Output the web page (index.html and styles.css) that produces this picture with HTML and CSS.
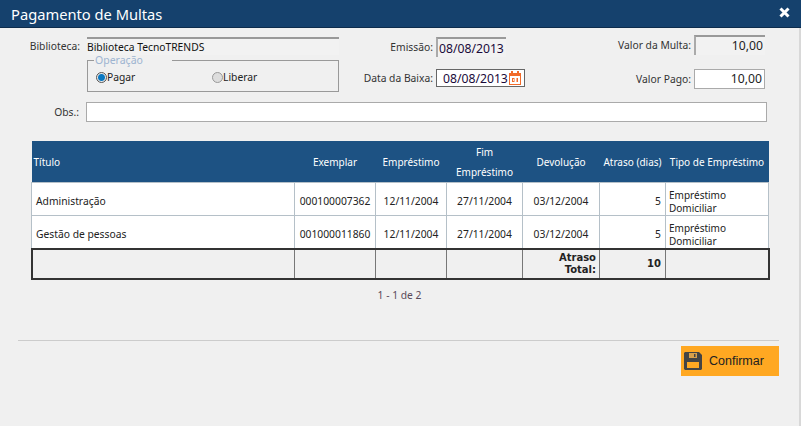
FILE: index.html
```html
<!DOCTYPE html>
<html lang="en">
<head>
    <meta charset="UTF-8">
    <title>Pagamento de Multas</title>
    <link rel="stylesheet" href="styles.css">
</head>
<body>
    <div class="dialog">
        <div class="dialog-header">
            <h1 class="dialog-title">Pagamento de Multas</h1>
            <svg class="close-icon" width="11" height="11" viewBox="0 0 11 11"><path d="M1.500 1.500l8 8M9.500 1.500l-8 8" stroke="#fff" stroke-width="3"/></svg>
        </div>

        <div class="form-top">
            <div class="col-a">
                <div class="field-row">
                    <label class="label-a">Biblioteca:</label>
                    <div class="readonly lib-value">Biblioteca TecnoTRENDS</div>
                </div>
                <fieldset class="operation">
                    <legend>Operação</legend>
                    <div class="radio-item radio-pay"><span class="radio on"></span>Pagar</div>
                    <div class="radio-item"><span class="radio"></span>Liberar</div>
                </fieldset>
            </div>
            <div class="col-b">
                <div class="field-row">
                    <label>Emissão:</label>
                    <div class="readonly date-value">08/08/2013</div>
                </div>
                <div class="field-row low-row">
                    <label>Data da Baixa:</label>
                    <div class="date-input">08/08/2013
                        <svg width="12" height="14" viewBox="0 0 12 14"><path d="M0 2h2V0h2v2h4V0h2v2h2v12H0z" fill="#f26b2a"/><rect x="1" y="5" width="10" height="8" fill="#fff"/><path d="M3 7h2.500v4H3zM7.500 7H9v4H7.500z" fill="#f26b2a"/><rect x="4" y="8" width="0.800" height="2" fill="#fff"/></svg>
                    </div>
                </div>
            </div>
            <div class="col-c">
                <div class="field-row">
                    <label>Valor da Multa:</label>
                    <div class="readonly money-value">10,00</div>
                </div>
                <div class="field-row paid-row">
                    <label>Valor Pago:</label>
                    <div class="text-input money-input">10,00</div>
                </div>
            </div>
        </div>

        <div class="field-row obs-row">
            <label class="label-obs">Obs.:</label>
            <div class="text-input obs-input"></div>
        </div>

        <table class="fines">
            <colgroup>
                <col class="c-title"><col class="c-copy"><col class="c-date"><col class="c-end"><col class="c-back"><col class="c-late"><col class="c-type">
            </colgroup>
            <thead>
                <tr>
                    <th class="left">Título</th>
                    <th>Exemplar</th>
                    <th>Empréstimo</th>
                    <th>Fim<br>Empréstimo</th>
                    <th>Devolução</th>
                    <th>Atraso (dias)</th>
                    <th>Tipo de Empréstimo</th>
                </tr>
            </thead>
            <tbody>
                <tr>
                    <td class="name">Administração</td>
                    <td class="mid">000100007362</td>
                    <td class="mid">12/11/2004</td>
                    <td class="mid">27/11/2004</td>
                    <td class="mid">03/12/2004</td>
                    <td class="num">5</td>
                    <td class="type">Empréstimo Domiciliar</td>
                </tr>
                <tr>
                    <td class="name">Gestão de pessoas</td>
                    <td class="mid">001000011860</td>
                    <td class="mid">12/11/2004</td>
                    <td class="mid">27/11/2004</td>
                    <td class="mid">03/12/2004</td>
                    <td class="num">5</td>
                    <td class="type">Empréstimo Domiciliar</td>
                </tr>
            </tbody>
            <tfoot>
                <tr>
                    <td></td>
                    <td></td>
                    <td></td>
                    <td></td>
                    <td class="total-label">Atraso Total:</td>
                    <td class="total-value">10</td>
                    <td></td>
                </tr>
            </tfoot>
        </table>

        <div class="pager">1 - 1 de 2</div>

        <div class="actions">
            <button class="confirm">
                <svg width="18" height="18" viewBox="0 0 18 18"><path d="M1 0h14l3 3v14l-1 1H1l-1-1V1z" fill="#444"/><rect x="5" y="1" width="8" height="5" fill="#d9a04a"/><rect x="10" y="2" width="1.500" height="3" fill="#444"/><rect x="3" y="10" width="12" height="6" fill="#ffa822"/></svg>
                Confirmar
            </button>
        </div>
    </div>
</body>
</html>
```

FILE: styles.css
```css
body {
    font-family: "Noto Sans", sans-serif;
    font-size: 10.300px;
    margin: 0;
    padding: 0;
    background-color: #f0f0f0;
    color: #222;
}

.dialog {
    height: 426px;
    box-shadow: inset -2px 0 0 #d8d8d8;
    overflow: hidden;
}

.dialog-header {
    display: flex;
    justify-content: space-between;
    align-items: center;
    height: 27px;
    padding: 0 11px 0 11px;
    background: #15416d;
    border-bottom: 1px solid #0d2c4c;
}

.dialog-title {
    margin: 0;
    font-size: 14.700px;
    font-weight: normal;
    color: #fff;
}

.close-icon {
    margin-bottom: 2px;
}

.form-top {
    display: flex;
    height: 74px;
}

.field-row {
    display: flex;
    align-items: center;
    justify-content: flex-end;
}

.field-row label {
    margin-right: 3px;
    color: #333;
    white-space: nowrap;
}

.col-a {
    width: 339px;
    padding-top: 9px;
    box-sizing: border-box;
}

.col-b {
    width: 186px;
    padding-top: 9px;
    box-sizing: border-box;
}

.col-c {
    width: 240px;
    padding-top: 7px;
    box-sizing: border-box;
}

.field-row .label-a {
    margin-right: 7px;
}

.readonly {
    box-sizing: border-box;
    border-top: 2px solid #999;
    border-left: 2px solid #aaa;
    background: #f2f2f2;
}

.lib-value {
    width: 252px;
    height: 18px;
    line-height: 17px;
    border-left-width: 0;
    color: #111;
}

.operation {
    box-sizing: border-box;
    display: flex;
    width: 252px;
    height: 38px;
    margin: -1px 0 0 87px;
    padding: 0 0 0 8px;
    border: 1px solid #999;
}

.operation legend {
    width: 78px;
    box-sizing: border-box;
    padding: 0 0 0 1px;
    margin-left: -2px;
    color: #9db4d0;
    font-size: 10.500px;
    line-height: 12px;
}

.radio-item {
    display: flex;
    align-items: center;
    height: 16px;
    margin-top: 3px;
}

.radio-pay {
    width: 116px;
}

.radio {
    width: 11px;
    height: 11px;
    box-sizing: border-box;
    border: 1px solid #999;
    border-radius: 50%;
    background: #ddd;
}

.radio.on {
    border-color: #555;
    background: radial-gradient(circle, #0a78c2 0 3px, #e8e8e8 4px);
}

.col-b .field-row {
    justify-content: flex-start;
}

.col-b label {
    width: 94px;
    text-align: right;
}

.col-b .low-row {
    margin-top: 12px;
}

.date-value {
    width: 70px;
    height: 20px;
    line-height: 19px;
    padding-left: 1px;
    font-size: 12.200px;
    color: #1a0a3a;
}

.date-input {
    display: flex;
    align-items: center;
    justify-content: space-between;
    box-sizing: border-box;
    width: 89px;
    height: 18px;
    padding: 0 3px 0 6px;
    border: 1px solid #666;
    background: #fff;
    font-size: 12.200px;
    color: #1a0a3a;
}

.money-value {
    width: 71px;
    height: 20px;
    line-height: 18px;
    padding-right: 2px;
    text-align: right;
    font-size: 12.200px;
}

.paid-row {
    margin-top: 14px;
}

.text-input {
    box-sizing: border-box;
    border: 1px solid #aaa;
    background: #fff;
}

.money-input {
    width: 71px;
    height: 20px;
    line-height: 18px;
    padding-right: 2px;
    text-align: right;
    font-size: 12.200px;
}

.obs-row {
    justify-content: flex-start;
}

.field-row .label-obs {
    width: 79px;
    margin-right: 7px;
    text-align: right;
}

.obs-input {
    width: 681px;
    height: 20px;
}

.fines {
    width: 737px;
    margin: 19px 0 0 31px;
    border-collapse: collapse;
    table-layout: fixed;
}

.c-title { width: 263px; }
.c-copy { width: 81px; }
.c-date { width: 71px; }
.c-end { width: 76px; }
.c-back { width: 77px; }
.c-late { width: 66px; }
.c-type { width: 103px; }

.fines th {
    height: 41px;
    padding: 0;
    background: #1d5283;
    color: #fff;
    font-size: 10px;
    line-height: 20px;
    font-weight: normal;
    text-align: center;
}

.fines th.left {
    text-align: left;
    padding-left: 2px;
}

.fines tbody td {
    height: 33px;
    padding: 3px 2px 0;
    box-sizing: border-box;
    background: #fff;
    border: 1px solid #b5c0c8;
    overflow: hidden;
}

.fines .name {
    padding-left: 4px;
}

.fines .mid {
    text-align: center;
}

.fines .num {
    text-align: right;
    padding-right: 4px;
}

.fines tbody .type {
    padding: 6px 2px 0 3px;
    font-size: 10px;
    line-height: 13px;
}

.fines tfoot tr {
    outline: 2px solid #333;
    outline-offset: -1px;
}

.fines tfoot td {
    height: 28px;
    padding: 0 3px;
    border: 1px solid #777;
    border-top: 2px solid #333;
    border-bottom: 2px solid #333;
}

.fines .total-label,
.fines .total-value {
    text-align: right;
    font-family: "DejaVu Sans", sans-serif;
    font-size: 10px;
    font-weight: bold;
    line-height: 12px;
}

.fines .total-value {
    padding-right: 4px;
}

.pager {
    width: 737px;
    margin: 8px 0 0 31px;
    line-height: 14px;
    text-align: center;
    color: #5a4a5a;
}

.actions {
    display: flex;
    justify-content: flex-end;
    width: 761px;
    margin: 38px 0 0 18px;
    padding-top: 5px;
    border-top: 1px solid #ccc;
}

.confirm {
    display: flex;
    align-items: center;
    gap: 7px;
    width: 98px;
    height: 30px;
    padding: 0 0 0 3px;
    background: #ffa822;
    color: #222;
    border: none;
    font-family: "Liberation Sans", sans-serif;
    font-size: 12.500px;
    cursor: pointer;
}
```
